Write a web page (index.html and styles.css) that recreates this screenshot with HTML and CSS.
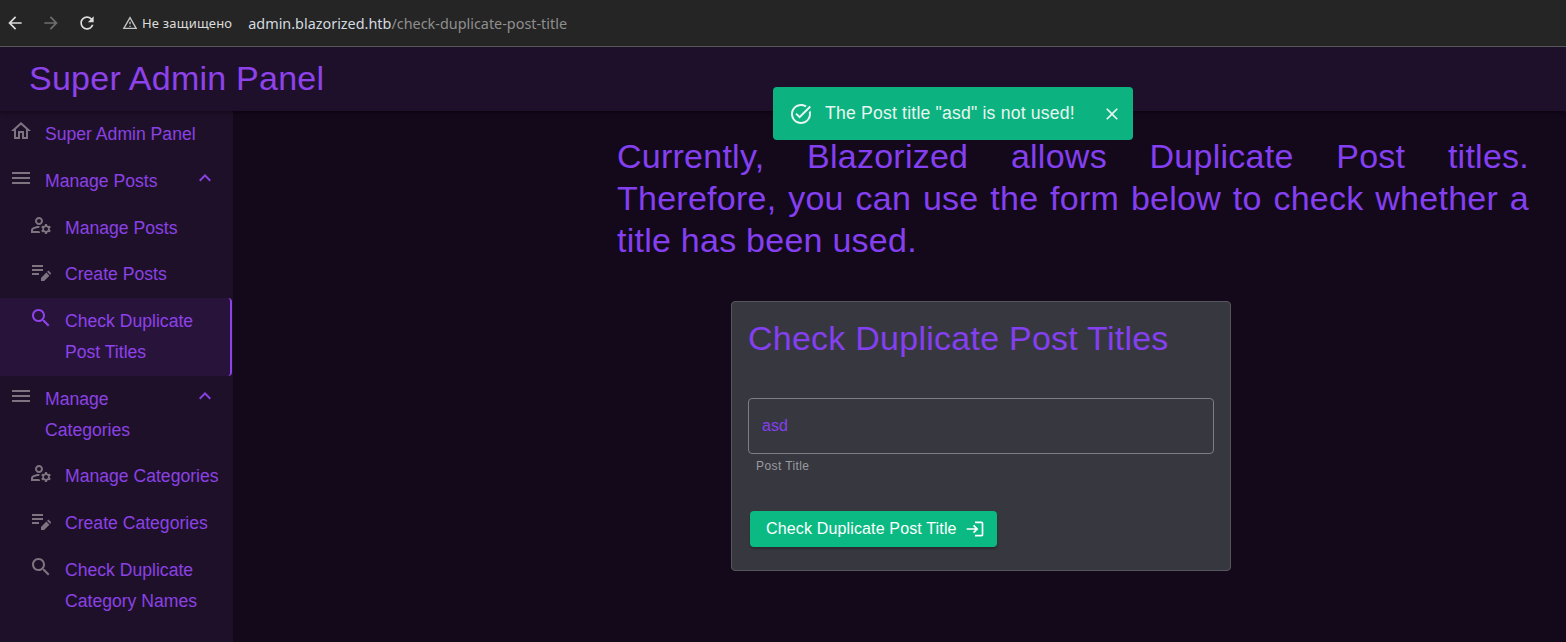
FILE: index.html
```html
<!DOCTYPE html>
<html lang="en">
<head>
<meta charset="UTF-8">
<meta name="viewport" content="width=device-width, initial-scale=1.0">
<title>Super Admin Panel</title>
<link rel="stylesheet" href="styles.css">
</head>
<body>
    <svg class="sprite" xmlns="http://www.w3.org/2000/svg">
        <symbol id="i_back" viewBox="0 0 24 24"><path d="M20 11H7.83l5.59-5.59L12 4l-8 8 8 8 1.41-1.41L7.83 13H20v-2z"/></symbol>
        <symbol id="i_forward" viewBox="0 0 24 24"><path d="M12 4l-1.41 1.41L16.17 11H4v2h12.17l-5.58 5.59L12 20l8-8z"/></symbol>
        <symbol id="i_reload" viewBox="0 0 24 24"><path d="M17.65 6.35C16.2 4.9 14.21 4 12 4c-4.42 0-7.99 3.58-7.99 8s3.57 8 7.99 8c3.73 0 6.84-2.55 7.73-6h-2.08c-.82 2.33-3.04 4-5.65 4-3.31 0-6-2.69-6-6s2.69-6 6-6c1.66 0 3.14.69 4.22 1.78L13 11h7V4l-2.35 2.35z"/></symbol>
        <symbol id="i_warn" viewBox="0 0 24 24"><path d="M12 5.99L19.53 19H4.47L12 5.99M12 2L1 21h22L12 2zm1 14h-2v2h2v-2zm0-6h-2v4h2v-4z"/></symbol>
        <symbol id="i_home" viewBox="0 0 24 24"><path d="M12 5.69l5 4.5V18h-2v-6H9v6H7v-7.81l5-4.5M12 3L2 12h3v8h6v-6h2v6h6v-8h3L12 3z"/></symbol>
        <symbol id="i_menu" viewBox="0 0 24 24"><path d="M3 18h18v-2H3v2zm0-5h18v-2H3v2zm0-7v2h18V6H3z"/></symbol>
        <symbol id="i_up" viewBox="0 0 24 24"><path d="M12 8l-6 6 1.41 1.41L12 10.83l4.59 4.58L18 14z"/></symbol>
        <symbol id="i_manage" viewBox="0 0 24 24"><path d="M4 18v-.65c0-.34.16-.66.41-.81C6.1 15.53 8.03 15 10 15c.03 0 .05 0 .08.01.1-.7.3-1.37.59-1.98-.22-.02-.44-.03-.67-.03-2.42 0-4.68.67-6.61 1.82-.88.52-1.39 1.5-1.39 2.53V20h9.26c-.42-.6-.75-1.28-.97-2H4zM10 12c2.21 0 4-1.79 4-4s-1.79-4-4-4-4 1.79-4 4 1.79 4 4 4zm0-6c1.1 0 2 .9 2 2s-.9 2-2 2-2-.9-2-2 .9-2 2-2z"/><path d="M20.75 16c0-.22-.03-.42-.06-.63l1.14-1.01-1-1.73-1.45.49c-.32-.27-.68-.48-1.08-.63L18 11h-2l-.3 1.49c-.4.15-.76.36-1.08.63l-1.45-.49-1 1.73 1.14 1.01c-.03.21-.06.41-.06.63s.03.42.06.63l-1.14 1.01 1 1.73 1.45-.49c.32.27.68.48 1.08.63L16 21h2l.3-1.49c.4-.15.76-.36 1.08-.63l1.45.49 1-1.73-1.14-1.01c.03-.21.06-.41.06-.63zM17 18c-1.1 0-2-.9-2-2s.9-2 2-2 2 .9 2 2-.9 2-2 2z"/></symbol>
        <symbol id="i_edit" viewBox="0 0 24 24"><path d="M3 10h11v2H3v-2zm0-2h11V6H3v2zm0 8h7v-2H3v2zm15.01-3.13l.71-.71c.39-.39 1.02-.39 1.41 0l1.59 1.59c.39.39.39 1.02 0 1.41l-.71.71-3-3zm-.71.71L12 18.88V22h3.12l5.3-5.3-3.12-3.12z"/></symbol>
        <symbol id="i_search" viewBox="0 0 24 24"><path d="M15.5 14h-.79l-.28-.27C15.41 12.59 16 11.11 16 9.5 16 5.91 13.09 3 9.5 3S3 5.91 3 9.5 5.91 16 9.5 16c1.61 0 3.09-.59 4.23-1.57l.27.28v.79l5 4.99L20.49 19l-4.99-5zm-6 0C7.01 14 5 11.99 5 9.5S7.01 5 9.5 5 14 7.01 14 9.5 11.99 14 9.5 14z"/></symbol>
        <symbol id="i_ok" viewBox="0 0 24 24"><path d="M22 5.18L10.59 16.6l-4.24-4.24 1.41-1.41 2.83 2.83 10-10L22 5.18zm-2.21 5.04c.13.57.21 1.17.21 1.78 0 4.42-3.58 8-8 8s-8-3.58-8-8 3.58-8 8-8c1.58 0 3.04.46 4.28 1.25l1.44-1.44C16.1 2.67 14.13 2 12 2 6.48 2 2 6.48 2 12s4.48 10 10 10 10-4.48 10-10c0-1.19-.22-2.33-.6-3.39l-1.61 1.61z"/></symbol>
        <symbol id="i_close" viewBox="0 0 24 24"><path d="M19 6.41L17.59 5 12 10.59 6.41 5 5 6.41 10.59 12 5 17.59 6.41 19 12 13.41 17.59 19 19 17.59 13.41 12 19 6.41z"/></symbol>
        <symbol id="i_login" viewBox="0 0 24 24"><path d="M11 7L9.6 8.4l2.6 2.6H2v2h10.2l-2.6 2.6L11 17l5-5-5-5zm9 12h-8v2h8c1.1 0 2-.9 2-2V5c0-1.1-.9-2-2-2h-8v2h8v14z"/></symbol>
    </svg>

    <div class="browser_bar">
        <svg class="bar_icon"><use href="#i_back"/></svg>
        <svg class="bar_icon off"><use href="#i_forward"/></svg>
        <svg class="bar_icon"><use href="#i_reload"/></svg>
        <div class="secure">
            <svg class="warn_icon"><use href="#i_warn"/></svg>
            <span>Не защищено</span>
        </div>
        <div class="url">admin.blazorized.htb<span class="url_path">/check-duplicate-post-title</span></div>
    </div>

    <header class="appbar">
        <h4 class="appbar_title">Super Admin Panel</h4>
    </header>

    <div class="layout">
        <nav class="sidebar">
            <a class="nav_link"><svg class="icon"><use href="#i_home"/></svg><span class="nav_text">Super Admin Panel</span></a>
            <a class="nav_link"><svg class="icon"><use href="#i_menu"/></svg><span class="nav_text">Manage Posts</span><svg class="icon chevron"><use href="#i_up"/></svg></a>
            <a class="nav_link sub"><svg class="icon"><use href="#i_manage"/></svg><span class="nav_text">Manage Posts</span></a>
            <a class="nav_link sub"><svg class="icon"><use href="#i_edit"/></svg><span class="nav_text">Create Posts</span></a>
            <a class="nav_link sub active"><svg class="icon"><use href="#i_search"/></svg><span class="nav_text">Check Duplicate Post Titles</span></a>
            <a class="nav_link"><svg class="icon"><use href="#i_menu"/></svg><span class="nav_text">Manage Categories</span><svg class="icon chevron"><use href="#i_up"/></svg></a>
            <a class="nav_link sub"><svg class="icon"><use href="#i_manage"/></svg><span class="nav_text">Manage Categories</span></a>
            <a class="nav_link sub"><svg class="icon"><use href="#i_edit"/></svg><span class="nav_text">Create Categories</span></a>
            <a class="nav_link sub"><svg class="icon"><use href="#i_search"/></svg><span class="nav_text">Check Duplicate Category Names</span></a>
        </nav>

        <main class="content">
            <p class="notice">Currently, Blazorized allows Duplicate Post titles. Therefore, you can use the form below to check whether a title has been used.</p>
            <form class="card">
                <h4 class="card_title">Check Duplicate Post Titles</h4>
                <div class="field">asd</div>
                <div class="helper">Post Title</div>
                <a class="btn">Check Duplicate Post Title<svg class="btn_icon"><use href="#i_login"/></svg></a>
            </form>
        </main>
    </div>

    <div class="toast">
        <svg class="toast_icon"><use href="#i_ok"/></svg>
        <span class="toast_text">The Post title "asd" is not used!</span>
        <svg class="toast_close"><use href="#i_close"/></svg>
    </div>
</body>
</html>
```

FILE: styles.css
```css
*{margin:0;padding:0;box-sizing:border-box}
html,body{height:100%;overflow:hidden}
body{display:flex;flex-direction:column;background-color:#14081b;font-family:"Liberation Sans",Arial,sans-serif;color:#8440f0}
svg{fill:currentColor;flex:none}
.sprite{display:none}

.browser_bar {display:flex; align-items:center; height:47px; flex:none; background-color:#252525; border-bottom:1px solid #5c5c5c; color:#dcdcdc; padding-left:5px;}
.bar_icon {width:20px; height:20px; margin-right:16px;}
.bar_icon.off {color:#6f6f6f;}
.secure {display:flex; align-items:center; margin-left:9px; font-family:"Noto Sans",sans-serif; font-size:13px; letter-spacing:.2px;}
.warn_icon {width:16px; height:16px; margin-right:4px; color:#c4c4c4;}
.url {margin-left:16px; font-family:"Noto Sans",sans-serif; font-size:14.4px; color:#d4dae0;}
.url_path {color:#8f8f8f;}

.appbar {height:64px; flex:none; padding:0 0 2px 29px; display:flex; align-items:center; background-color:#1e102b; box-shadow:0 2px 4px rgba(0,0,0,.35); position:relative; z-index:1;}
.appbar_title {font-size:34px; font-weight:400; line-height:42px; letter-spacing:.25px; color:#8e42ea;}

.layout {display:flex; flex:1; min-height:0;}
.sidebar {width:233px; flex:none; background-color:#1f1029;}
.nav_link {display:flex; align-items:flex-start; padding:8px 16px 8px 9px; font-size:17.6px; line-height:30.8px; color:#8a42e4;}
.nav_link .icon {width:24px; height:24px; color:#7d7480;}
.nav_text {flex:1; margin-left:12px;}
.nav_link .chevron {color:#8a42e4;}
.nav_link.sub {padding:8px 8px 8px 29px;}
.nav_link.active {margin-right:1px; background-color:#28133a; border-right:2px solid #8e42ea; border-radius:0 4px 4px 0; color:#8e42ea;}
.nav_link.active .icon {color:#8e42ea;}

.content {flex:1; padding:24px 37px 0 384px;}
.notice {font-size:34px; line-height:42px; letter-spacing:.25px; text-align:justify; color:#8440f0;}

.card {width:500px; height:270px; margin:40px 0 0 114px; padding:15px 16px 16px; background-color:#37373f; border:1px solid #55555c; border-radius:4px;}
.card_title {font-size:34px; font-weight:400; line-height:42px; letter-spacing:.25px; color:#8440f0; white-space:nowrap;}
.field {height:56px; margin-top:39px; padding:0 13px; border:1px solid #7d7d84; border-radius:4px; font-size:16px; line-height:54px; color:#8440f0;}
.helper {margin:5px 0 0 8px; font-size:12px; line-height:14px; letter-spacing:.4px; color:#9a9a9f;}
.btn {display:inline-flex; align-items:center; height:36px; margin:38px 0 0 2px; padding:0 12px 0 16px; font-size:16px; letter-spacing:.15px; color:#fff; background-color:#0bba83; border-radius:4px; box-shadow:0 2px 2px rgba(0,0,0,.25);}
.btn_icon {width:20px; height:20px; margin-left:8px;}

.toast {position:absolute; left:773px; top:87px; width:360px; height:53px; display:flex; align-items:center; padding-left:16px; border-radius:4px; background-color:#0cb27f; color:#e8f6f1; z-index:2;}
.toast_icon {width:24px; height:24px; margin-right:12px;}
.toast_text {flex:1; font-size:17.6px; letter-spacing:.2px;}
.toast_close {width:20px; height:20px; margin-right:11px;}
```
